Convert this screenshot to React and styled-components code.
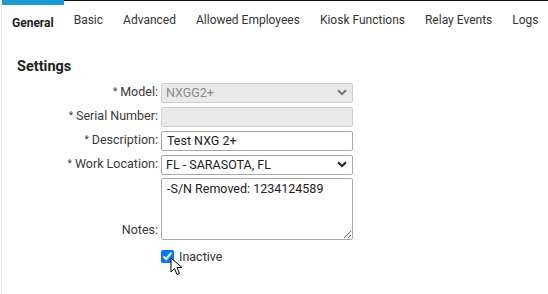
import React from "react";
import styled, { createGlobalStyle } from "styled-components";

const Global = createGlobalStyle`
  html, body {
    margin: 0;
    padding: 0;
    background: #fff;
  }
  body {
    font-family: Roboto, "Liberation Sans", Arial, sans-serif;
    color: #333;
  }
`;

const Page = styled.div`
  width: 548px;
  height: 294px;
  position: relative;
  overflow: hidden;
  border-left: 1px solid #ececec;
  margin-left: 1px;
  box-sizing: border-box;
`;

const TabBar = styled.div`
  display: flex;
  height: 40px;
  border-top: 1px solid #111;
  margin-left: -2px;
`;

const Tab = styled.div`
  padding: ${(p) => (p.$active ? "11px 10px 0 12px" : "13px 10px 0")};
  font-size: 12px;
  font-weight: ${(p) => (p.$active ? 700 : 400)};
  color: ${(p) => (p.$active ? "#222" : "#333")};
  white-space: nowrap;
  margin-top: -1px;
  border-top: ${(p) => (p.$active ? "5px solid #1b9ad6" : "none")};
`;

const Content = styled.div`
  padding: 17px 0 0 15px;
`;

const Heading = styled.h2`
  margin: 0 0 7px;
  font-size: 14.5px;
  font-weight: 700;
  color: #222;
`;

const Form = styled.div`
  display: grid;
  grid-template-columns: 141px 192px;
  column-gap: 3px;
  row-gap: 4px;
`;

const Label = styled.label`
  font-size: 12.5px;
  color: #3a3a3a;
  text-align: right;
  align-self: ${(p) => (p.$bottom ? "end" : "center")};
  white-space: nowrap;
  line-height: 20px;
`;

const Req = styled.span`
  font-size: 10px;
  margin-right: 3px;
  vertical-align: 1px;
`;

const Field = styled.div`
  position: relative;
  height: 20px;
`;

const baseInput = `
  width: 100%;
  height: 20px;
  box-sizing: border-box;
  border: 1px solid #a9a9a9;
  border-radius: 2px;
  font-family: Roboto, "Liberation Sans", Arial, sans-serif;
  font-size: 12.5px;
  color: #222;
  padding: 0 5px;
  outline: none;
  background: #fff;
`;

const TextInput = styled.input`
  ${baseInput}
  &:disabled {
    background: #e9e9e9;
    border-color: #cfcfcf;
  }
`;

const Select = styled.select`
  ${baseInput}
  appearance: none;
  padding-left: 4px;
  &:disabled {
    background: #e9e9e9;
    border-color: #cfcfcf;
    color: #8a8a8a;
    opacity: 1;
  }
`;

const Chevron = styled.svg`
  position: absolute;
  right: 6px;
  top: 7px;
  pointer-events: none;
`;

const Notes = styled.textarea`
  ${baseInput}
  height: 62px;
  padding: 2px 5px;
  resize: vertical;
  display: block;
`;

const CheckRow = styled.div`
  grid-column: 2;
  display: flex;
  align-items: center;
  gap: 5px;
  margin-top: 5px;
  font-size: 12.5px;
  color: #333;
`;

const Check = styled.input`
  width: 13px;
  height: 13px;
  margin: 0;
`;

const Cursor = styled.svg`
  position: absolute;
  left: 168px;
  top: 257px;
`;

const tabs = ["General", "Basic", "Advanced", "Allowed Employees", "Kiosk Functions", "Relay Events", "Logs"];

const Arrow = ({ color }) => (
  <Chevron width="10" height="7" viewBox="0 0 10 7">
    <path d="M1 1.2 L5 5 L9 1.2" fill="none" stroke={color} strokeWidth="2" />
  </Chevron>
);

export default function App() {
  return (
    <>
      <Global />
      <Page>
        <TabBar>
          {tabs.map((t, i) => (
            <Tab key={t} $active={i === 0}>
              {t}
            </Tab>
          ))}
        </TabBar>
        <Content>
          <Heading>Settings</Heading>
          <Form>
            <Label>
              <Req>*</Req>Model:
            </Label>
            <Field>
              <Select disabled defaultValue="NXGG2+">
                <option>NXGG2+</option>
              </Select>
              <Arrow color="#777" />
            </Field>
            <Label>
              <Req>*</Req>Serial Number:
            </Label>
            <Field>
              <TextInput disabled defaultValue="" />
            </Field>
            <Label>
              <Req>*</Req>Description:
            </Label>
            <Field>
              <TextInput defaultValue="Test NXG 2+" />
            </Field>
            <Label>
              <Req>*</Req>Work Location:
            </Label>
            <Field>
              <Select defaultValue="FL - SARASOTA, FL">
                <option>FL - SARASOTA, FL</option>
              </Select>
              <Arrow color="#222" />
            </Field>
            <Label $bottom>Notes:</Label>
            <Notes defaultValue="-S/N Removed: 1234124589" />
            <CheckRow>
              <Check type="checkbox" defaultChecked />
              Inactive
            </CheckRow>
          </Form>
        </Content>
        <Cursor width="14" height="20" viewBox="0 0 14 20">
          <path d="M1 1 L1 15 L4.5 11.5 L7 17.5 L9.5 16.5 L7 10.5 L12 10.5 Z" fill="#fff" stroke="#000" strokeWidth="1" />
        </Cursor>
      </Page>
    </>
  );
}
